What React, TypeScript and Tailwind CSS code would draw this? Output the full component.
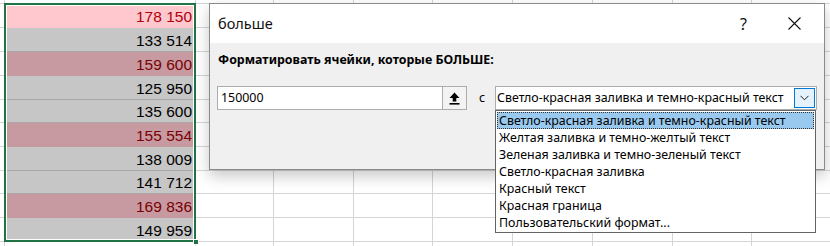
import React from "react";

const rowsH = [24, 24, 24, 24, 23, 24, 24, 23, 24, 24];
const colW = [5, 191, 78, 80, 79, 80, 80, 80, 79, 200];
const data: { v: string; red?: boolean; active?: boolean }[] = [
  { v: "178 150", red: true, active: true },
  { v: "133 514" },
  { v: "159 600", red: true },
  { v: "125 950" },
  { v: "135 600" },
  { v: "155 554", red: true },
  { v: "138 009" },
  { v: "141 712" },
  { v: "169 836", red: true },
  { v: "149 959" },
];

const items = [
  "Светло-красная заливка и темно-красный текст",
  "Желтая заливка и темно-желтый текст",
  "Зеленая заливка и темно-зеленый текст",
  "Светло-красная заливка",
  "Красный текст",
  "Красная граница",
  "Пользовательский формат...",
];

function GridRow({ h }: { h: number }) {
  return (
    <div className="flex" style={{ height: h }}>
      {colW.map((w, i) => (
        <div key={i} className="shrink-0 border-r border-b border-[#d4d4d4]" style={{ width: w }} />
      ))}
    </div>
  );
}

export default function App() {
  const ui = { fontFamily: '"Noto Sans", "Liberation Sans", sans-serif' };
  return (
    <div className="relative w-[830px] h-[246px] overflow-hidden bg-white">
      {/* sheet */}
      <div className="flex flex-col">
        <GridRow h={4} />
        {rowsH.map((h, r) => {
          const d = data[r];
          return (
            <div key={r} className="flex" style={{ height: h }}>
              {colW.map((w, i) => {
                if (i === 1) {
                  const bg = d.active
                    ? "bg-[#ffc7ce] border-[#ffc7ce]"
                    : d.red
                    ? "bg-[#c69aa0] border-[#c69aa0]"
                    : "bg-[#c6c6c6] border-[#a8a8a8]";
                  const tc = d.active ? "text-[#b0000a]" : d.red ? "text-[#7a0005]" : "text-black";
                  return (
                    <div
                      key={i}
                      className={`shrink-0 border-b flex items-center justify-end pr-[4px] pt-[2px] text-[15.5px] ${bg} ${tc}`}
                      style={{ width: w, fontFamily: '"Liberation Sans", Arial, sans-serif' }}
                    >
                      {d.v}
                    </div>
                  );
                }
                return (
                  <div key={i} className="shrink-0 border-r border-b border-[#d4d4d4]" style={{ width: w }} />
                );
              })}
            </div>
          );
        })}
        <GridRow h={30} />
      </div>

      {/* selection */}
      <div className="absolute left-[4px] top-[3px] w-[192px] h-[239px] border-2 border-[#217346] shadow-[inset_0_0_0_1px_white]" />
      <div className="absolute left-[193px] top-[239px] w-[6px] h-[6px] bg-[#217346] border border-white" />

      {/* dialog */}
      <div
        className="absolute left-[209px] top-[3px] w-[616px] h-[167px] border border-[#8a8a8a] bg-[#f0f0f0] flex flex-col shadow-[0_6px_14px_rgba(0,0,0,0.22)]"
        style={ui}
      >
        <div className="h-[39px] bg-white flex items-center pl-[8px] text-[14.5px] text-[#111]">
          <span>больше</span>
          <span className="ml-auto mr-[41px] text-[16px]">?</span>
          <svg width="13" height="13" viewBox="0 0 13 13" className="mr-[23px]">
            <path d="M0.5 0.5 L12.5 12.5 M12.5 0.5 L0.5 12.5" stroke="#111" strokeWidth="1.1" />
          </svg>
        </div>
        <div className="flex flex-col px-[7px]">
          <div className="pt-[9px] pl-[1px] text-[12.4px] font-bold leading-[16px] text-black">
            Форматировать ячейки, которые БОЛЬШЕ:
          </div>
          <div className="mt-[18px] flex items-center">
            <div className="w-[250px] h-[24px] border border-[#adadad] bg-white flex">
              <div className="flex-1 flex items-center pl-[3px] text-[12.4px] text-black">150000</div>
              <div className="w-[24px] h-full border-l border-[#adadad] bg-[#f3f3f3] flex items-center justify-center">
                <svg width="11" height="13" viewBox="0 0 11 13">
                  <path d="M5.5 0.5 L10.5 6 L7.3 6 L7.3 9.5 L3.7 9.5 L3.7 6 L0.5 6 Z" fill="#000" />
                  <rect x="0.5" y="11" width="10" height="1.6" fill="#000" />
                </svg>
              </div>
            </div>
            <span className="ml-[12px] text-[12.4px] text-black">с</span>
            <div className="ml-[10px] w-[322px] h-[24px] border border-[#adadad] bg-white flex items-center">
              <span className="flex-1 pl-[1px] text-[12.4px] text-black whitespace-nowrap">
                Светло-красная заливка и темно-красный текст
              </span>
              <div className="w-[21px] h-[20px] mr-[1px] border border-[#0078d7] bg-[#e5f1fb] flex items-center justify-center">
                <svg width="9" height="6" viewBox="0 0 9 6">
                  <path d="M0.5 0.8 L4.5 4.8 L8.5 0.8" stroke="#222" strokeWidth="1" fill="none" />
                </svg>
              </div>
            </div>
          </div>
        </div>
      </div>

      {/* dropdown list */}
      <div className="absolute left-[495px] top-[110px] w-[321px] border border-[#646464] bg-white py-[1px] px-[1px]" style={ui}>
        {items.map((t, i) => (
          <div
            key={i}
            className={`h-[17px] leading-[16px] pl-[1px] text-[12.4px] text-black whitespace-nowrap ${
              i === 0 ? "bg-[#99c9ef] border border-dotted border-[#333]" : "border border-transparent"
            }`}
          >
            {t}
          </div>
        ))}
      </div>
    </div>
  );
}
